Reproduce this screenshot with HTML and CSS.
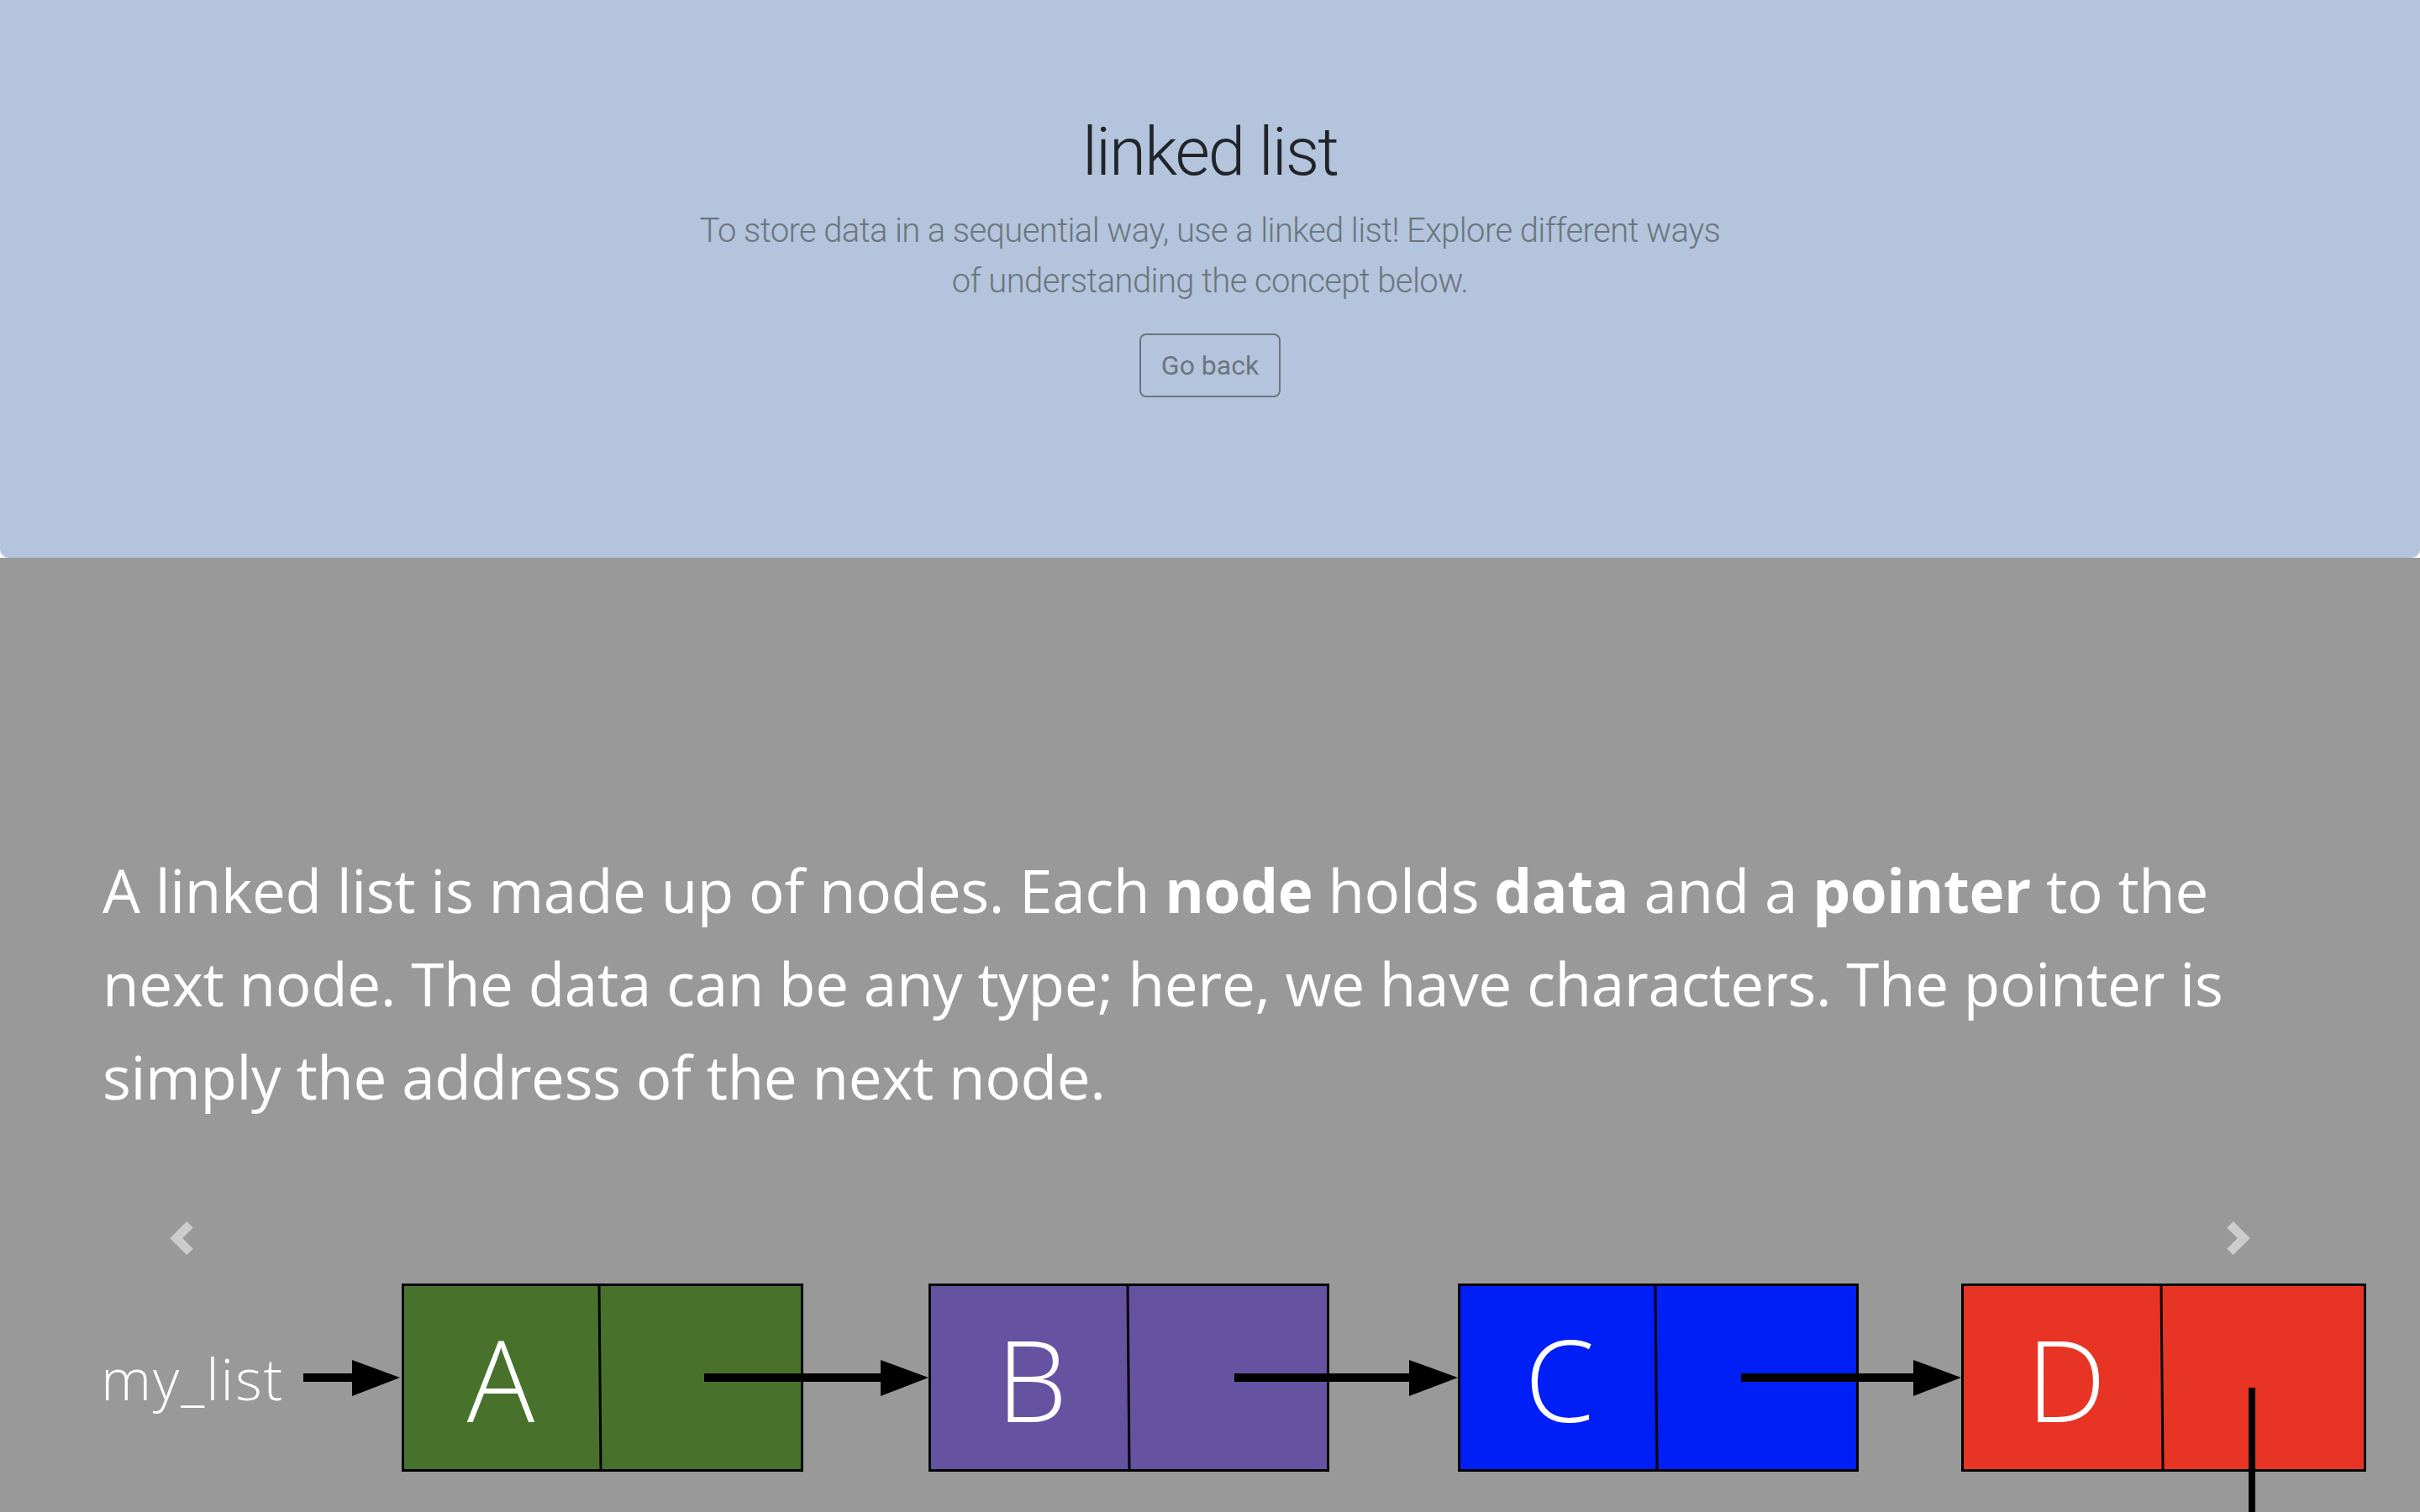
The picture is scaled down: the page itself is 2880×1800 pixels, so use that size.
FILE: index.html
```html
<!DOCTYPE html>
<html lang="en">
<head>
<meta charset="utf-8">
<title>linked list</title>
<link rel="stylesheet" href="styles.css">
</head>
<body>
<div class="page">
  <section class="hero">
    <div class="hero-inner">
      <h1 class="hero-title">linked list</h1>
      <p class="hero-lead">To store data in a sequential way, use a linked list! Explore different ways<br>of understanding the concept below.</p>
      <p class="hero-actions"><a class="btn-outline" href="#">Go back</a></p>
    </div>
  </section>

  <section class="stage">
    <div class="carousel">
      <div class="slide">
        <p class="slide-text">A linked list is made up of nodes. Each <b>node</b> holds <b>data</b> and a <b>pointer</b> to the<br>next node. The data can be any type; here, we have characters. The pointer is<br>simply the address of the next node.</p>
        <svg class="diagram" viewBox="0 0 2880 480" width="2880" height="480">
          <text class="lbl" x="120" y="247">my_list</text>
          <line x1="361" y1="220" x2="425" y2="220" class="wire"/>
          <polygon points="419,199 476,220 419,242" class="head"/>

          <rect x="479.5" y="109.5" width="475" height="221" class="node" fill="#48722c"/>
          <line x1="713" y1="109.5" x2="715" y2="330.5" class="div"/>
          <text class="letter" x="596" y="273">A</text>
          <line x1="838" y1="220" x2="1052" y2="220" class="wire"/>
          <polygon points="1048,199 1105,220 1048,242" class="head"/>

          <rect x="1106.5" y="109.5" width="474" height="221" class="node" fill="#6553a1"/>
          <line x1="1342" y1="109.5" x2="1344" y2="330.5" class="div"/>
          <text class="letter" x="1228" y="273">B</text>
          <line x1="1469" y1="220" x2="1680" y2="220" class="wire"/>
          <polygon points="1677,199 1735,220 1677,242" class="head"/>

          <rect x="1736.5" y="109.5" width="474" height="221" class="node" fill="#001ef6"/>
          <line x1="1970" y1="109.5" x2="1972" y2="330.5" class="div"/>
          <text class="letter" x="1856" y="273">C</text>
          <line x1="2072" y1="220" x2="2280" y2="220" class="wire"/>
          <polygon points="2277,199 2334,220 2277,242" class="head"/>

          <rect x="2335.5" y="109.5" width="479" height="221" class="node" fill="#e83424"/>
          <line x1="2572" y1="109.5" x2="2574" y2="330.5" class="div"/>
          <text class="letter" x="2459" y="273">D</text>
          <line x1="2680" y1="232" x2="2680" y2="480" class="drop"/>
        </svg>
      </div>
      <a class="ctrl ctrl-prev" href="#" aria-label="Previous">
        <svg class="ctrl-icon" viewBox="0 0 8 8" width="40" height="40"><path d="M5.25 0l-4 4 4 4 1.5-1.5-2.5-2.5 2.5-2.5-1.5-1.5z"/></svg>
      </a>
      <a class="ctrl ctrl-next" href="#" aria-label="Next">
        <svg class="ctrl-icon" viewBox="0 0 8 8" width="40" height="40"><path d="M2.75 0l-1.5 1.5 2.5 2.5-2.5 2.5 1.5 1.5 4-4-4-4z"/></svg>
      </a>
    </div>
  </section>
</div>
</body>
</html>
```
FILE: styles.css
```css
html, body {
  margin: 0;
  padding: 0;
  background: #ffffff;
}

.page {
  height: 100vh;
  overflow: hidden;
}

.hero {
  box-sizing: border-box;
  height: 664px;
  padding: 133px 64px 0;
  background: #b3c4dc;
  border-radius: 0 0 10px 10px;
  text-align: center;
  font-family: Roboto, "Liberation Sans", sans-serif;
}

.hero-inner {
  max-width: 1280px;
  margin: 0 auto;
  padding: 0 30px;
}

.hero-title {
  margin: 0 0 16px;
  font-size: 80px;
  line-height: 96px;
  font-weight: 300;
  letter-spacing: -2px;
  color: #212529;
}

.hero-lead {
  margin: 0 0 32px;
  font-size: 40px;
  line-height: 60px;
  font-weight: 300;
  letter-spacing: -0.6px;
  color: #6c757d;
}

.hero-actions {
  display: flex;
  justify-content: center;
  margin: 4px 0 0;
}

.btn-outline {
  display: inline-block;
  padding: 12px 24px;
  border: 2px solid #6c757d;
  border-radius: 8px;
  font-size: 32px;
  line-height: 48px;
  font-weight: 400;
  color: #6c757d;
  text-decoration: none;
}

.stage {
  background: #999999;
}

.carousel {
  position: relative;
  height: 1620px;
}

.slide {
  padding-top: 340px;
}

.slide-text {
  margin: 0;
  padding-left: 122px;
  font-family: "Open Sans", "Noto Sans", sans-serif;
  font-size: 71px;
  line-height: 111px;
  font-weight: 400;
  letter-spacing: -0.35px;
  color: #ffffff;
  white-space: nowrap;
}

.slide-text b {
  font-weight: 700;
}

.diagram {
  display: block;
  margin-top: 83px;
}

.lbl {
  font-family: "Open Sans", "Noto Sans", sans-serif;
  font-size: 68px;
  font-weight: 300;
  letter-spacing: 2px;
  fill: #ffffff;
}

.letter {
  font-family: "Open Sans", "Noto Sans", sans-serif;
  font-size: 134px;
  font-weight: 300;
  fill: #ffffff;
  text-anchor: middle;
}

.node {
  stroke: #000000;
  stroke-width: 3;
}

.div {
  stroke: #000000;
  stroke-width: 3;
}

.wire {
  stroke: #000000;
  stroke-width: 10;
}

.drop {
  stroke: #000000;
  stroke-width: 8;
}

.head {
  fill: #000000;
}

.ctrl {
  position: absolute;
  top: 0;
  bottom: 0;
  width: 15%;
  display: flex;
  align-items: center;
  justify-content: center;
  opacity: 0.5;
}

.ctrl-prev {
  left: 0;
}

.ctrl-next {
  right: 0;
}

.ctrl-icon {
  fill: #ffffff;
}
```
